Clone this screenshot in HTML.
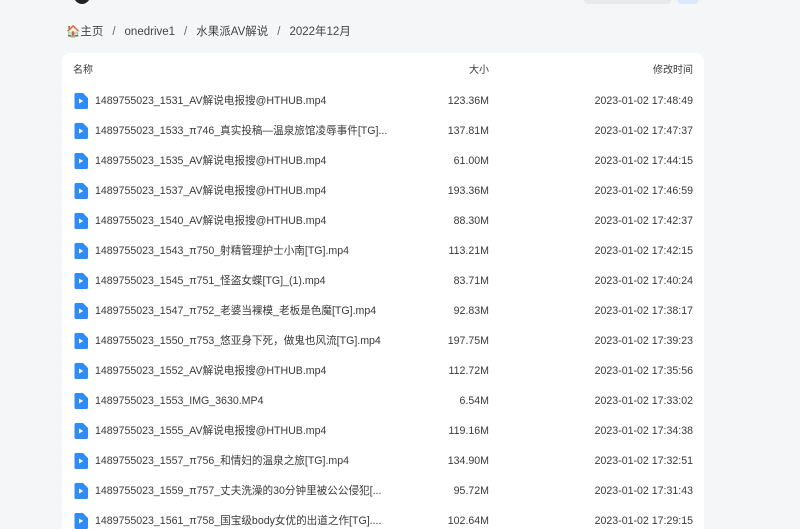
<!DOCTYPE html>
<html style="overflow:hidden;height:529px"><head><meta charset="utf-8"><style>
body{margin:0;width:800px;height:529px;background:#f5f6f8;font-family:"Liberation Sans","Noto Sans CJK SC",sans-serif;overflow:hidden;position:relative;color:#333}
.crumb{position:absolute;left:66px;top:23px;font-size:11.5px;color:#444}
.crumb span.s{margin:0 9px;color:#666}
.card{position:absolute;left:62px;top:53px;width:642px;height:476px;background:#fff;border-radius:8px 8px 0 0;overflow:hidden}
.row{position:absolute;left:0;width:642px;height:30px;font-size:10.6px;line-height:30px}
.n{position:absolute;left:33px;color:#3a3a3a}
.sz{position:absolute;right:215px;color:#3a3a3a}
.t{position:absolute;right:11px;color:#3a3a3a}
.ic{position:absolute;left:12px;top:7px}
.hd{font-size:10px;color:#555}
</style></head><body>
<div style="position:absolute;left:74px;top:-12px;width:16px;height:16px;border-radius:50%;background:#222"></div>
<div style="position:absolute;left:584px;top:-6px;width:87px;height:10px;border-radius:4px;background:#e8e9eb"></div>
<div style="position:absolute;left:678px;top:-6px;width:20px;height:10px;border-radius:3px;background:#dbe8fb"></div>
<div class="crumb">🏠主页<span class="s">/</span>onedrive1<span class="s">/</span>水果派AV解说<span class="s">/</span>2022年12月</div>
<div class="card">
<div class="row hd" style="top:3px"><span class="n" style="left:11px">名称</span><span class="sz">大小</span><span class="t">修改时间</span></div>
</div>
<script>
const d=[["1489755023_1531_AV解说电报搜@HTHUB.mp4","123.36M","17:48:49"],
["1489755023_1533_π746_真实投稿—温泉旅馆凌辱事件[TG]...","137.81M","17:47:37"],
["1489755023_1535_AV解说电报搜@HTHUB.mp4","61.00M","17:44:15"],
["1489755023_1537_AV解说电报搜@HTHUB.mp4","193.36M","17:46:59"],
["1489755023_1540_AV解说电报搜@HTHUB.mp4","88.30M","17:42:37"],
["1489755023_1543_π750_射精管理护士小南[TG].mp4","113.21M","17:42:15"],
["1489755023_1545_π751_怪盗女蝶[TG]_(1).mp4","83.71M","17:40:24"],
["1489755023_1547_π752_老婆当裸模_老板是色魔[TG].mp4","92.83M","17:38:17"],
["1489755023_1550_π753_悠亚身下死，做鬼也风流[TG].mp4","197.75M","17:39:23"],
["1489755023_1552_AV解说电报搜@HTHUB.mp4","112.72M","17:35:56"],
["1489755023_1553_IMG_3630.MP4","6.54M","17:33:02"],
["1489755023_1555_AV解说电报搜@HTHUB.mp4","119.16M","17:34:38"],
["1489755023_1557_π756_和情妇的温泉之旅[TG].mp4","134.90M","17:32:51"],
["1489755023_1559_π757_丈夫洗澡的30分钟里被公公侵犯[...","95.72M","17:31:43"],
["1489755023_1561_π758_国宝级body女优的出道之作[TG]....","102.64M","17:29:15"]];
const c=document.querySelector('.card');let h='';
d.forEach((r,i)=>{h+=`<div class="row" style="top:${33+i*30}px"><svg class="ic" width="14" height="16" viewBox="0 0 14 16"><path d="M2 0h7l5 5v9.5a1.5 1.5 0 0 1-1.5 1.5h-10.5a1.5 1.5 0 0 1-1.5-1.5v-13a1.5 1.5 0 0 1 1.5-1.5z" fill="#2f8cf5"/><path d="M5 5.5v5l4.2-2.5z" fill="#fff"/></svg><span class="n">${r[0]}</span><span class="sz">${r[1]}</span><span class="t">2023-01-02 ${r[2]}</span></div>`});
c.insertAdjacentHTML('beforeend',h);
</script>
</body></html>
